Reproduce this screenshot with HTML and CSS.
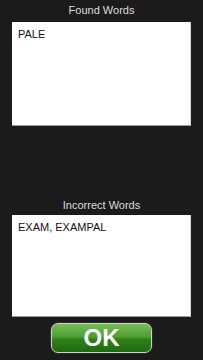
FILE: index.html
```html
<!DOCTYPE html>
<html lang="en">
<head>
    <meta charset="UTF-8">
    <meta name="viewport" content="width=device-width, initial-scale=1.0">
    <title>Results</title>
    <link rel="stylesheet" href="styles.css">
</head>
<body>

<div id="results">
    <!-- Found words -->
    <div class="section-title found-title">Found Words</div>
    <div class="word-box found-box">PALE</div>

    <!-- Incorrect words -->
    <div class="section-title incorrect-title">Incorrect Words</div>
    <div class="word-box incorrect-box">EXAM, EXAMPAL</div>

    <div class="button-row">
        <button id="ok-button">OK</button>
    </div>
</div>

</body>
</html>
```

FILE: styles.css
```css
body {
    margin: 0;
    background-color: #1b1b1b;
    font-family: "Liberation Sans", Arial, sans-serif;
}

#results {
    display: flex;
    flex-direction: column;
    height: 360px;
    padding: 0 12px;
    box-sizing: border-box;
}

.section-title {
    color: #dcdcdc;
    font-size: 11px;
    line-height: 20px;
    text-align: center;
}

.found-title {
    margin-bottom: 2px;
}

.incorrect-title {
    margin-top: 69px;
}

.word-box {
    background-color: #ffffff;
    color: #111;
    font-size: 11px;
    line-height: 13px;
    padding: 6px 6px;
    box-sizing: border-box;
    border-bottom: 1px solid #9a9a9a;
    border-right: 1px solid #d8d8d8;
}

.found-box {
    height: 104px;
}

.incorrect-box {
    height: 102px;
}

.button-row {
    display: flex;
    justify-content: center;
    margin-top: 6px;
}

#ok-button {
    width: 101px;
    height: 30px;
    border: 1px solid #c9d6c2;
    border-radius: 7px;
    background: linear-gradient(to bottom, #78bd5a 0%, #4e9e32 45%, #2f8119 55%, #1f6a0e 100%);
    box-shadow: 0 0 0 1px #2a2a2a;
    color: #ffffff;
    font-family: "Liberation Sans", Arial, sans-serif;
    font-weight: bold;
    font-size: 24px;
    line-height: 26px;
    padding: 0;
}
```
